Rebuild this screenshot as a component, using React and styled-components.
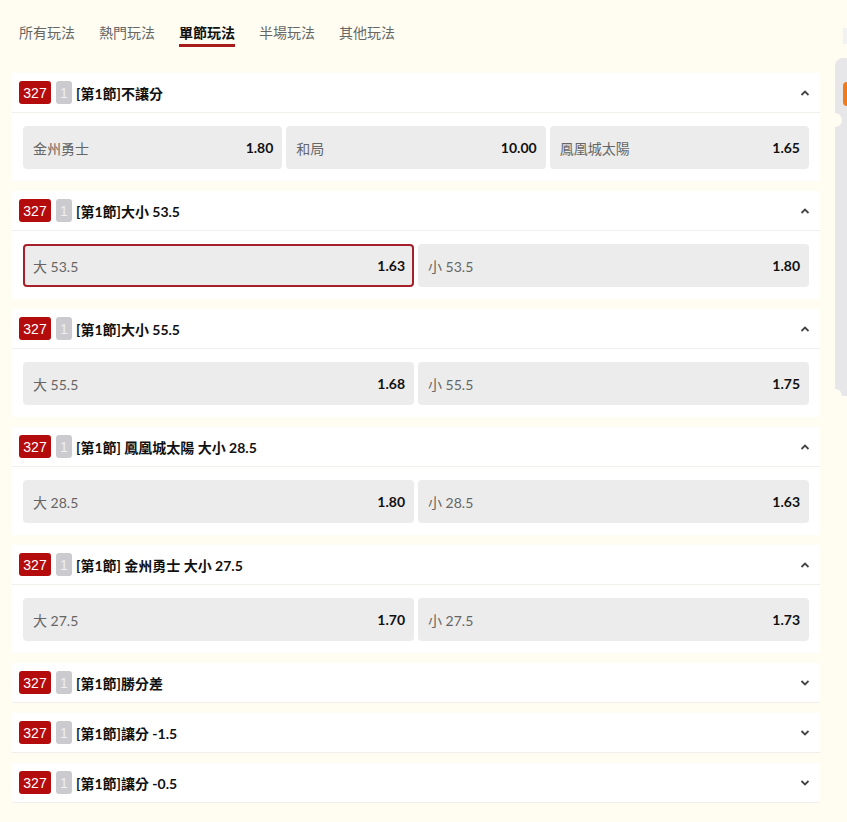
import React from 'react';
import styled, { createGlobalStyle } from 'styled-components';

const GlobalStyle = createGlobalStyle`
    html, body {
        margin: 0;
        padding: 0;
        background: #fffdf2;
        overflow: hidden;
    }
    body {
        font-family: Lato, "Noto Sans CJK TC", "Noto Sans", sans-serif;
        color: #111;
    }
`;

const Page = styled.div`
    display: flex;
    align-items: flex-start;
    width: 847px;
    height: 822px;
    overflow: hidden;
`;

const Main = styled.div`
    width: 808px;
    padding: 0 12px;
    flex-shrink: 0;
`;

const Tabs = styled.div`
    display: flex;
    gap: 24px;
    padding: 23px 0 0 7px;
    margin-bottom: 26px;
`;

const Tab = styled.div`
    font-size: 14px;
    line-height: 20px;
    padding-bottom: 1px;
    color: ${({ active }) => (active ? '#111' : '#666')};
    font-weight: ${({ active }) => (active ? 700 : 400)};
    border-bottom: 3px solid ${({ active }) => (active ? '#a81c1c' : 'transparent')};
`;

const List = styled.div`
    display: flex;
    flex-direction: column;
    gap: 10px;
`;

const Card = styled.div`
    background: #fff;
`;

const Header = styled.div`
    box-sizing: border-box;
    height: 40px;
    display: flex;
    align-items: center;
    gap: 4px;
    padding: 0 10px 0 7px;
    border-bottom: 1px solid #f0efec;
`;

const Badge = styled.span`
    display: inline-flex;
    align-items: center;
    justify-content: center;
    height: 23px;
    min-width: ${({ grey }) => (grey ? '16px' : '32px')};
    margin-left: ${({ grey }) => (grey ? '1px' : '0')};
    border-radius: 3px;
    background: ${({ grey }) => (grey ? '#cbcbcf' : '#b40c0c')};
    color: ${({ grey }) => (grey ? '#eeeef0' : '#fff')};
    font-family: "Liberation Sans", "Noto Sans", sans-serif;
    font-size: 14px;
`;

const Title = styled.span`
    flex: 1;
    font-size: 14px;
    font-weight: 700;
    color: #111;
`;

const Body = styled.div`
    display: flex;
    gap: 4px;
    padding: 13px 11px 12px;
`;

const Odd = styled.div`
    box-sizing: border-box;
    flex: 1;
    height: 43px;
    display: flex;
    align-items: center;
    justify-content: space-between;
    padding: 0 7px 0 8px;
    border-radius: 4px;
    background: #ececec;
    border: 2px solid ${({ selected }) => (selected ? '#a5202a' : 'transparent')};
    font-size: 14px;
`;

const Label = styled.span`
    color: #666;
`;

const Price = styled.span`
    color: #111;
    font-weight: 700;
`;

const Side = styled.div`
    position: relative;
    flex-shrink: 0;
    margin-top: 58px;
    margin-left: 3px;
    width: 200px;
    height: 338px;
    background: #e7e7e9;
    border-radius: 8px 0 0 8px;
    &::before, &::after {
        content: '';
        position: absolute;
        left: -7px;
        width: 14px;
        height: 14px;
        border-radius: 50%;
        background: #fffdf2;
    }
    &::before { top: 55px; }
    &::after { bottom: -7px; }
`;

const SideTop = styled.div`
    position: absolute;
    left: 8px;
    top: -30px;
    width: 100px;
    height: 16px;
    background: #f2f2f2;
`;

const SideTag = styled.div`
    margin: 24px 0 0 8px;
    height: 24px;
    border-radius: 4px;
    background: #f07b1a;
`;

function Chevron({ up }) {
    return (
        <svg width="10" height="6" viewBox="0 0 10 6" fill="none">
            <path d={up ? 'M1.5 5 L5 1.5 L8.5 5' : 'M1.5 1 L5 4.5 L8.5 1'} stroke="#444" strokeWidth="1.8" />
        </svg>
    );
}

const markets = [
    { title: '[第1節]不讓分', odds: [['金州勇士', '1.80'], ['和局', '10.00'], ['鳳凰城太陽', '1.65']] },
    { title: '[第1節]大小 53.5', odds: [['大 53.5', '1.63', true], ['小 53.5', '1.80']] },
    { title: '[第1節]大小 55.5', odds: [['大 55.5', '1.68'], ['小 55.5', '1.75']] },
    { title: '[第1節] 鳳凰城太陽 大小 28.5', odds: [['大 28.5', '1.80'], ['小 28.5', '1.63']] },
    { title: '[第1節] 金州勇士 大小 27.5', odds: [['大 27.5', '1.70'], ['小 27.5', '1.73']] },
    { title: '[第1節]勝分差' },
    { title: '[第1節]讓分 -1.5' },
    { title: '[第1節]讓分 -0.5' },
];

const tabs = ['所有玩法', '熱門玩法', '單節玩法', '半場玩法', '其他玩法'];

export default function App() {
    return (
        <Page>
            <GlobalStyle />
            <Main>
                <Tabs>
                    {tabs.map((t) => (
                        <Tab key={t} active={t === '單節玩法'}>{t}</Tab>
                    ))}
                </Tabs>
                <List>
                    {markets.map((m) => (
                        <Card key={m.title}>
                            <Header>
                                <Badge>327</Badge>
                                <Badge grey>1</Badge>
                                <Title>{m.title}</Title>
                                <Chevron up={!!m.odds} />
                            </Header>
                            {m.odds && (
                                <Body>
                                    {m.odds.map(([label, price, selected]) => (
                                        <Odd key={label} selected={selected}>
                                            <Label>{label}</Label>
                                            <Price>{price}</Price>
                                        </Odd>
                                    ))}
                                </Body>
                            )}
                        </Card>
                    ))}
                </List>
            </Main>
            <Side>
                <SideTop />
                <SideTag />
            </Side>
        </Page>
    );
}
